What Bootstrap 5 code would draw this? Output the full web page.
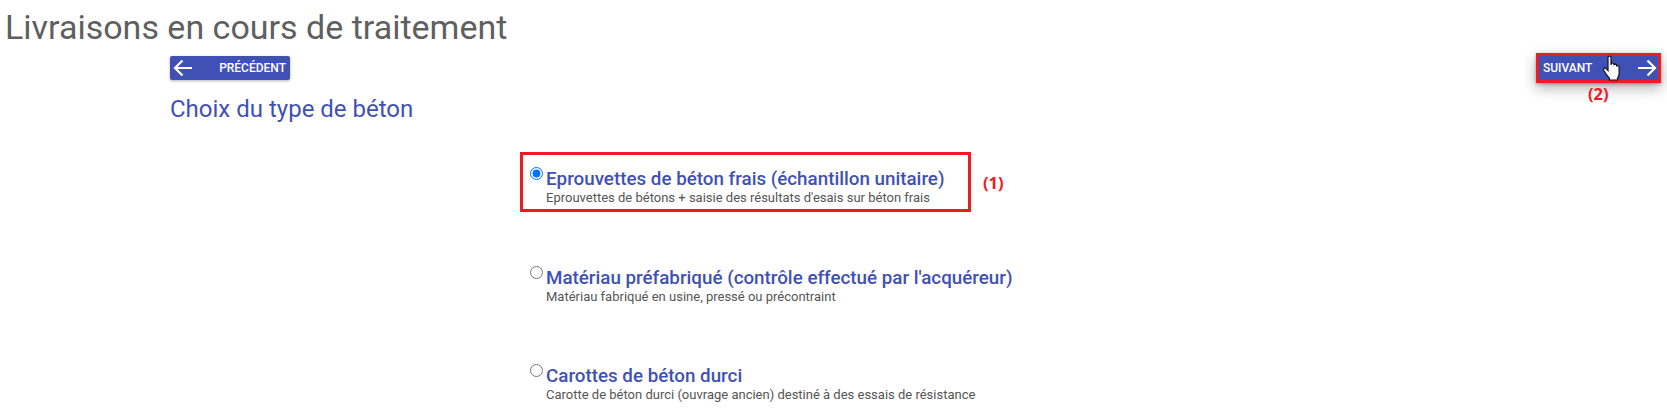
<!DOCTYPE html>
<html lang="fr"><head><meta charset="utf-8"><title>Livraisons</title>
<link href="https://cdn.jsdelivr.net/npm/bootstrap@5.3.0/dist/css/bootstrap.min.css" rel="stylesheet">
<style>
html,body{height:410px;overflow:hidden;background:#fff}
body{font-family:Roboto,sans-serif;color:#555}
.page-title{font-size:34px;font-weight:400;color:#5f5f5f;line-height:40px;margin:0;padding:7px 0 0 5px;height:53px}
.wizard{padding:3px 6px 0 170px}
.nav-btn{background:#3f51b5;color:#fff;font-size:12px;font-weight:500;border:0;border-radius:2px;height:24px;padding:0;box-shadow:0 1px 3px rgba(0,0,0,.3)}
.prev-btn{width:120px;padding:0 4px 0 3px}
.next-wrap{outline:3px solid #ed1c24;outline-offset:-3px;position:relative;width:125px;height:30px;margin-top:-3px;box-shadow:0 5px 14px rgba(0,0,0,.3)}
.next-btn{width:100%;height:100%;padding:0 4px 0 7px;border-radius:0}
.step-title{font-size:24px;color:#3f51b5;line-height:28px;margin:12px 0 0;font-weight:400}
.opts{margin-left:360px;width:470px;padding-top:46px}
.opt{height:98.5px;margin:0;gap:3px}
.opt:last-child{height:auto}
.opt input{width:13px;height:13px;margin:-2px 0 0;flex:none;accent-color:#0075ff}
.opt-name{display:block;font-size:18.8px;font-weight:500;color:#3f51b5;line-height:22px;white-space:nowrap;margin-top:-1px}
.opt-desc{display:block;font-size:13px;color:#555;line-height:16px;white-space:nowrap}
.mark-box{position:absolute;border:3px solid #ed1c24;left:520px;top:152px;width:451px;height:60px}
.note{position:absolute;color:#ed1c24;font-weight:700;font-size:16.500px;font-family:"Open Sans",sans-serif;line-height:22px}
.note-one{left:983px;top:172px}
.note-two{left:1588px;top:83px}
.cursor{position:absolute;left:1602px;top:55px}
</style></head><body>
<h1 class="page-title">Livraisons en cours de traitement</h1>
<div class="wizard">
  <div class="d-flex justify-content-between align-items-start">
    <button class="nav-btn prev-btn d-flex align-items-center justify-content-between" type="button">
      <svg width="19" height="18" viewBox="0 0 19 18" aria-hidden="true"><path d="M19 9H2M9.500 1.500 2 9l7.500 7.500" fill="none" stroke="#fff" stroke-width="2.200"/></svg><span>PRÉCÉDENT</span>
    </button>
    <div class="next-wrap">
      <button class="nav-btn next-btn d-flex align-items-center justify-content-between" type="button">
        <span>SUIVANT</span><svg width="19" height="18" viewBox="0 0 19 18" aria-hidden="true"><path d="M0 9h17M9.500 1.500 17 9l-7.500 7.500" fill="none" stroke="#fff" stroke-width="2.200"/></svg>
      </button>
    </div>
  </div>
  <h2 class="step-title">Choix du type de béton</h2>
  <div class="opts">
    <label class="opt d-flex align-items-start"><input type="radio" name="t" checked><span><span class="opt-name">Eprouvettes de béton frais (échantillon unitaire)</span><span class="opt-desc">Eprouvettes de bétons + saisie des résultats d'esais sur béton frais</span></span></label>
    <label class="opt d-flex align-items-start"><input type="radio" name="t"><span><span class="opt-name">Matériau préfabriqué (contrôle effectué par l'acquéreur)</span><span class="opt-desc">Matériau fabriqué en usine, pressé ou précontraint</span></span></label>
    <label class="opt d-flex align-items-start"><input type="radio" name="t"><span><span class="opt-name">Carottes de béton durci</span><span class="opt-desc">Carotte de béton durci (ouvrage ancien) destiné à des essais de résistance</span></span></label>
  </div>
</div>
<div class="mark-box"></div>
<div class="note note-one">(1)</div>
<div class="note note-two">(2)</div>
<svg class="cursor" width="20" height="26" viewBox="0 0 20 26" aria-hidden="true"><path d="M6 2.500C6 .8 9 .8 9 2.500V10l.2-1c.3-1.400 2.600-1.300 2.700.2l.1.900c.3-1.300 2.500-1.200 2.600.3l.1 1c.4-1.100 2.300-.9 2.400.7V18c0 2.800-1 4-1.600 5.500V25H7.500v-1.500C6.200 22 3.500 18.500 1.800 15.500c-1-1.900 1.100-3.300 2.400-1.900L6 15.500z" fill="#fff" stroke="#111" stroke-width="1.200"/></svg>
<script src="https://cdn.jsdelivr.net/npm/bootstrap@5.3.0/dist/js/bootstrap.bundle.min.js"></script>
</body></html>
